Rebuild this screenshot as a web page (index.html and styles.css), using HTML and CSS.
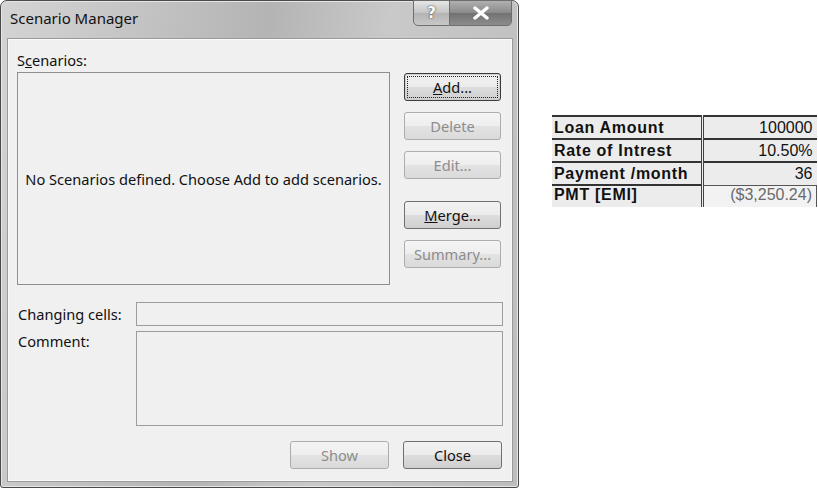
FILE: index.html
```html
<!DOCTYPE html>
<html>
<head>
<meta charset="utf-8">
<link rel="stylesheet" href="styles.css">
</head>
<body>
<div class="dialog">
  <div class="titlebar">
    <span class="title">Scenario Manager</span>
    <div class="caption-btns">
      <span class="cbtn help">?</span>
      <span class="cbtn close"><svg width="18" height="14" viewBox="0 0 18 14"><path d="M3 2 L15 12 M15 2 L3 12" stroke="#fff" stroke-width="3.4" stroke-linecap="round"/></svg></span>
    </div>
  </div>
  <div class="client">
    <div class="lbl top-lbl">S<u>c</u>enarios:</div>
    <div class="main">
      <div class="listbox">No Scenarios defined. Choose Add to add scenarios.</div>
      <div class="side">
        <button class="btn default"><span class="focus"><u>A</u>dd...</span></button>
        <button class="btn disabled">Delete</button>
        <button class="btn disabled">Edit...</button>
        <button class="btn gap"><u>M</u>erge...</button>
        <button class="btn disabled">Summary...</button>
      </div>
    </div>
    <div class="row changing">
      <span class="lbl rowlbl">Changing cells:</span>
      <div class="field short"></div>
    </div>
    <div class="row comment">
      <span class="lbl rowlbl">Comment:</span>
      <div class="field tall"></div>
    </div>
    <div class="footer">
      <button class="btn wide disabled">Show</button>
      <button class="btn wide">Close</button>
    </div>
  </div>
</div>
<div class="sheet">
  <table class="loan">
    <tr><td class="k">Loan Amount</td><td class="v">100000</td></tr>
    <tr><td class="k">Rate of Intrest</td><td class="v">10.50%</td></tr>
    <tr><td class="k">Payment /month</td><td class="v">36</td></tr>
    <tr class="last"><td class="k">PMT [EMI]</td><td class="v res">($3,250.24)</td></tr>
  </table>
</div>
</body>
</html>
```
FILE: styles.css
```css
html, body {
  margin: 0;
  padding: 0;
  background: #fff;
  overflow: hidden;
}
body {
  width: 818px;
  height: 491px;
  display: flex;
  align-items: flex-start;
  font-family: "Noto Sans", "Open Sans", sans-serif;
  color: #111;
}
.dialog {
  width: 519px;
  height: 488px;
  box-sizing: border-box;
  border: 1px solid #4a4a4a;
  border-radius: 7px 7px 3px 3px;
  background: linear-gradient(100deg, #d4d4d4 0%, #c6c6c6 20%, #b4b4b4 45%, #c9c9c9 65%, #bdbdbd 100%);
  box-shadow: inset 0 0 0 1px #e6e6e6;
  display: flex;
  flex-direction: column;
  flex-shrink: 0;
}
.titlebar {
  height: 38px;
  display: flex;
  justify-content: space-between;
  align-items: flex-start;
  padding-left: 9px;
  padding-right: 6px;
}
.title {
  font-size: 15px;
  line-height: 38px;
  color: #111;
  margin-top: -2px;
}
.caption-btns {
  display: flex;
  margin-top: -1px;
}
.cbtn {
  height: 26px;
  box-sizing: border-box;
  border: 1px solid #6e6e6e;
  display: flex;
  align-items: center;
  justify-content: center;
}
.help {
  width: 37px;
  border-radius: 0 0 0 5px;
  background: linear-gradient(#e6e6e6, #c4c4c4 50%, #b3b3b3 51%, #c8c8c8);
  font-family: "DejaVu Sans", sans-serif;
  font-weight: bold;
  font-size: 15px;
  color: #fff;
  text-shadow: 0 0 2px #555, 0 0 1px #333;
}
.close {
  width: 62px;
  border-left: none;
  border-radius: 0 0 5px 0;
  background: linear-gradient(#b0b0b0, #8a8a8a 50%, #727272 51%, #8c8c8c);
}
.client {
  flex: 1;
  margin: 0 6px 6px 7px;
  background: #f0f0f0;
  border: 1px solid #fafafa;
  outline: 1px solid #9a9a9a;
  padding: 10px 8px 0 8px;
  display: flex;
  flex-direction: column;
}
.lbl {
  font-size: 14.6px;
  color: #111;
}
.top-lbl {
  height: 22px;
  line-height: 20px;
}
.main {
  display: flex;
  gap: 14px;
}
.listbox {
  width: 373px;
  height: 213px;
  box-sizing: border-box;
  border: 1px solid #8e8e8e;
  background: #f0f0f0;
  display: flex;
  align-items: center;
  justify-content: center;
  font-size: 14.6px;
  color: #111;
  white-space: nowrap;
}
.side {
  display: flex;
  flex-direction: column;
  gap: 11px;
  padding-top: 1px;
}
.btn {
  width: 97px;
  height: 28px;
  box-sizing: border-box;
  border: 1px solid #707070;
  border-radius: 3px;
  background: linear-gradient(#f2f2f2, #ebebeb 50%, #dddddd 51%, #cfcfcf);
  font-family: "Noto Sans", "Open Sans", sans-serif;
  font-size: 14.6px;
  color: #111;
  padding: 0;
  display: flex;
  align-items: center;
  justify-content: center;
}
.btn.wide {
  width: 99px;
}
.btn.default {
  border-color: #3c3c3c;
  box-shadow: inset 0 0 0 1px #cfcfcf;
}
.focus {
  width: 89px;
  height: 20px;
  line-height: 20px;
  outline: 1px dotted #222;
  display: block;
}
.btn.disabled {
  color: #8d8d8d;
  border-color: #adadad;
  background: linear-gradient(#f4f4f4, #eeeeee 50%, #e3e3e3 51%, #dadada);
}
.btn.gap {
  margin-top: 11px;
}
.row {
  display: flex;
}
.rowlbl {
  width: 118px;
  flex-shrink: 0;
  padding-left: 1px;
}
.changing {
  margin-top: 17px;
  align-items: center;
}
.comment {
  margin-top: 5px;
}
.comment .rowlbl {
  line-height: 20px;
}
.field {
  width: 367px;
  box-sizing: border-box;
  border: 1px solid #9c9c9c;
  background: #f0f0f0;
}
.short {
  height: 24px;
}
.tall {
  height: 95px;
}
.footer {
  margin-top: 15px;
  display: flex;
  justify-content: flex-end;
  gap: 14px;
  padding-right: 1px;
}
.sheet {
  margin-left: 33px;
  margin-top: 115px;
  height: 92px;
  overflow: hidden;
  flex-shrink: 0;
}
.loan {
  border-collapse: collapse;
  font-family: "Liberation Sans", Arial, sans-serif;
  font-size: 16px;
  color: #111;
  width: 265px;
}
.loan td {
  height: 21px;
  padding: 0 2px;
  line-height: 21px;
  border-top: 2px solid #333;
  background: #ececec;
}
.loan .k {
  width: 145px;
  font-weight: bold;
  letter-spacing: 0.7px;
  border-right: 3px double #444;
}
.loan .v {
  text-align: right;
  padding-right: 4px;
}
.loan .last td {
  line-height: 18px;
  vertical-align: top;
}
.loan .res {
  color: #6a6a6a;
  border: 1px solid #555;
  border-left-width: 3px;
  border-left-style: double;
  background: #f2f2f2;
}
```
